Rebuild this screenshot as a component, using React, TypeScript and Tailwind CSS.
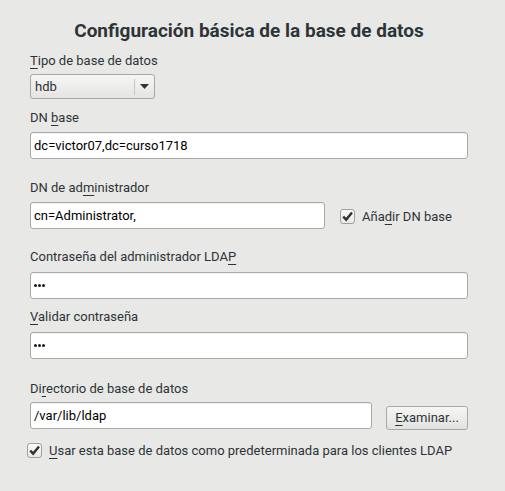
import type { ReactNode } from 'react';

const FONT = { fontFamily: 'Roboto, "Noto Sans", "DejaVu Sans", sans-serif' };

function Label({ children, className = '' }: { children: ReactNode; className?: string }) {
  return <div className={`h-[16px] text-[13px] leading-[16px] text-[#2e3436] ${className}`}>{children}</div>;
}

function U({ children }: { children: ReactNode }) {
  return <span className="underline decoration-1 underline-offset-[3px]">{children}</span>;
}

function Field({ value, className = '' }: { value: string; className?: string }) {
  return (
    <div
      className={`flex h-[27px] items-center rounded-[3px] border border-[#a9a9a6] bg-white px-[3px] text-[13px] text-black shadow-[inset_0_1px_1px_rgba(0,0,0,0.06)] ${className}`}
    >
      {value}
    </div>
  );
}

function Dots({ className = '' }: { className?: string }) {
  return (
    <div
      className={`flex h-[27px] items-center gap-[1px] rounded-[3px] border border-[#a9a9a6] bg-white px-[3px] shadow-[inset_0_1px_1px_rgba(0,0,0,0.06)] ${className}`}
    >
      <span className="h-[3px] w-[3px] rounded-full bg-[#1a1a1a]" />
      <span className="h-[3px] w-[3px] rounded-full bg-[#1a1a1a]" />
      <span className="h-[3px] w-[3px] rounded-full bg-[#1a1a1a]" />
    </div>
  );
}

function Check() {
  return (
    <span className="flex h-[15px] w-[15px] shrink-0 items-center justify-center rounded-[3px] border border-[#a0a09d] bg-gradient-to-b from-[#fbfbfa] to-[#e9e9e7]">
      <svg width="13" height="13" viewBox="0 0 13 13">
        <path d="M2.2 6.6 L5.2 9.6 L11 2.6" fill="none" stroke="#2e3436" strokeWidth="2.4" strokeLinejoin="miter" />
      </svg>
    </span>
  );
}

export default function App() {
  return (
    <div className="min-h-[491px] w-[505px] bg-[#e8e8e7] pl-[30px] pr-[37px] pt-[19px]" style={FONT}>
      <h1 className="h-[24px] text-center text-[19px] font-bold leading-[24px] text-[#2e3436]">
        Configuración básica de la base de datos
      </h1>

      <Label className="mt-[10px]">
        <U>T</U>ipo de base de datos
      </Label>
      <div className="mt-[5px] flex h-[25px] w-[125px] items-center rounded-[3px] border border-[#a8a8a5] bg-gradient-to-b from-[#f6f6f5] to-[#e4e4e2] text-[13px] text-[#2e3436]">
        <span className="flex-1 pl-[4px]">hdb</span>
        <span className="h-[16px] w-px bg-[#c8c8c5]" />
        <span className="flex w-[19px] justify-center">
          <svg width="9" height="5" viewBox="0 0 9 5">
            <path d="M0 0 H9 L4.5 5 Z" fill="#2e3436" />
          </svg>
        </span>
      </div>

      <Label className="mt-[11px]">
        DN <U>b</U>ase
      </Label>
      <Field value="dc=victor07,dc=curso1718" className="mt-[6px]" />

      <Label className="mt-[21px]">
        DN de ad<U>m</U>inistrador
      </Label>
      <div className="mt-[6px] flex items-center">
        <Field value="cn=Administrator," className="w-[295px]" />
        <label className="ml-[15px] mt-[2px] flex items-center gap-[7px] text-[13px] text-[#2e3436]">
          <Check />
          <span>
            Aña<U>d</U>ir DN base
          </span>
        </label>
      </div>

      <Label className="mt-[20px]">
        Contraseña del administrador LDA<U>P</U>
      </Label>
      <Dots className="mt-[7px]" />

      <Label className="mt-[10px]">
        <U>V</U>alidar contraseña
      </Label>
      <Dots className="mt-[7px]" />

      <Label className="mt-[22px]">
        Di<U>r</U>ectorio de base de datos
      </Label>
      <div className="mt-[5px] flex items-start">
        <Field value="/var/lib/ldap" className="w-[342px]" />
        <button
          type="button"
          className="ml-[14px] mt-[4px] h-[24px] w-[82px] rounded-[3px] border border-[#a8a8a5] bg-gradient-to-b from-[#f6f6f5] to-[#e2e2e0] text-[13px] text-[#2e3436]"
        >
          <U>E</U>xaminar...
        </button>
      </div>

      <label className="ml-[-3px] mt-[11px] flex items-center gap-[7px] text-[13px] text-[#2e3436]">
        <Check />
        <span>
          <U>U</U>sar esta base de datos como predeterminada para los clientes LDAP
        </span>
      </label>
    </div>
  );
}
